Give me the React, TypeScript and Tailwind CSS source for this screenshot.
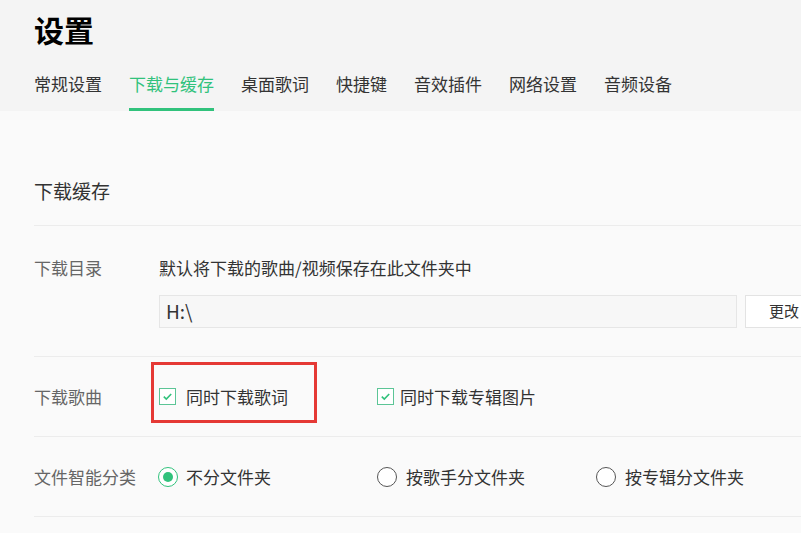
const font = "[font-family:'Noto_Sans_CJK_SC','Noto_Sans',sans-serif]";

const tabs = ["常规设置", "下载与缓存", "桌面歌词", "快捷键", "音效插件", "网络设置", "音频设备"];

function Checkbox() {
  return (
    <span className="flex h-[17px] w-[17px] shrink-0 items-center justify-center border-[1.5px] border-[#5cc596] bg-white">
      <svg width="11" height="11" viewBox="0 0 11 11" fill="none">
        <path d="M1.8 5.6 L4.3 8 L9.2 3" stroke="#31c27c" strokeWidth="1.6" />
      </svg>
    </span>
  );
}

function Radio({ checked }: { checked?: boolean }) {
  return (
    <span
      className={`flex h-[20px] w-[20px] shrink-0 items-center justify-center rounded-full border-[1.5px] ${
        checked ? "border-[#31c27c]" : "border-[#555]"
      } bg-white`}
    >
      {checked && <span className="h-[10px] w-[10px] rounded-full bg-[#31c27c]" />}
    </span>
  );
}

export default function App() {
  return (
    <div className={`h-[533px] w-[801px] overflow-hidden bg-[#fafafa] text-[#333] ${font}`}>
      {/* header */}
      <div className="h-[111px] bg-[#f4f4f4] px-[34px] pt-[14px]">
        <h1 className="text-[30px] font-bold leading-[30px] text-black">设置</h1>
        <div className="mt-[28px] flex gap-[27px]">
          {tabs.map((t, i) => (
            <div
              key={t}
              className={`h-[39px] border-b-[3px] text-[17px] leading-[24px] ${
                i === 1 ? "border-[#31c27c] text-[#31c27c]" : "border-transparent"
              }`}
            >
              {t}
            </div>
          ))}
        </div>
      </div>

      {/* content */}
      <div className="pl-[34px]">
        <div className="border-b border-[#ececec] pb-[21px] pt-[67px] text-[19px] leading-[26px]">下载缓存</div>

        <div className="flex border-b border-[#ececec] pb-[28px] pt-[30px]">
          <div className="w-[125px] shrink-0 text-[17px] leading-[24px] text-[#666]">下载目录</div>
          <div className="flex flex-col">
            <div className="text-[17px] leading-[24px]">默认将下载的歌曲/视频保存在此文件夹中</div>
            <div className="mt-[15px] flex gap-[8px]">
              <div className="flex h-[33px] w-[578px] items-center border border-[#e6e6e6] bg-[#f7f7f7] pl-[6px] text-[19px]">
                H:\
              </div>
              <button className="h-[33px] w-[80px] shrink-0 border border-[#e3e3e3] bg-white pl-[23px] text-left text-[15px]">
                更改
              </button>
            </div>
          </div>
        </div>

        <div className="relative flex h-[80px] items-center border-b border-[#ececec]">
          <div className="w-[125px] shrink-0 text-[17px] text-[#666]">下载歌曲</div>
          <div className="flex w-[218px] items-center gap-[10px]">
            <Checkbox />
            <span className="text-[17px]">同时下载歌词</span>
          </div>
          <div className="flex items-center gap-[6px]">
            <Checkbox />
            <span className="text-[17px]">同时下载专辑图片</span>
          </div>
          <div className="absolute left-[117px] top-[5px] h-[61px] w-[166px] border-[3px] border-[#e53935]" />
        </div>

        <div className="flex h-[80px] items-center border-b border-[#ececec]">
          <div className="w-[124px] shrink-0 text-[17px] text-[#666]">文件智能分类</div>
          <div className="flex w-[219px] items-center gap-[8px]">
            <Radio checked />
            <span className="text-[17px]">不分文件夹</span>
          </div>
          <div className="flex w-[219px] items-center gap-[9px]">
            <Radio />
            <span className="text-[17px]">按歌手分文件夹</span>
          </div>
          <div className="flex items-center gap-[9px]">
            <Radio />
            <span className="text-[17px]">按专辑分文件夹</span>
          </div>
        </div>
      </div>
    </div>
  );
}
